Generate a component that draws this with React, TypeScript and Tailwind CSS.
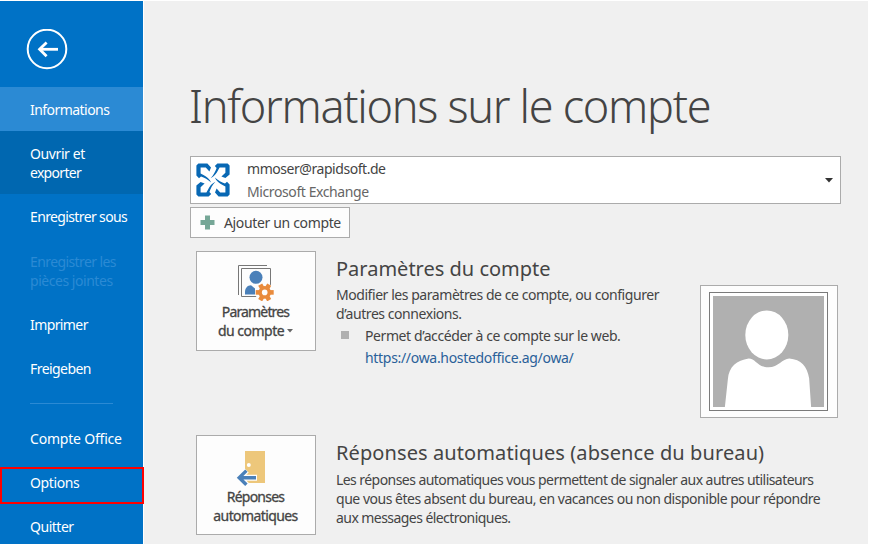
import { clsx } from "clsx";
import type { ReactNode } from "react";

type MenuItem = {
  label: ReactNode;
  className: string;
};

const topItems: MenuItem[] = [
  { label: "Informations", className: "h-[44px] bg-[#2b8ad4] tracking-[-0.55px]" },
  {
    label: (
      <>
        <span className="tracking-[-0.4px]">Ouvrir et</span>
        <br />
        exporter
      </>
    ),
    className: "h-[63px] bg-[#0067b0] pt-px tracking-[-0.7px]",
  },
  { label: "Enregistrer sous", className: "h-[46px] pb-px tracking-[-0.63px]" },
  {
    label: (
      <>
        <span className="tracking-[-0.6px]">Enregistrer les</span>
        <br />
        pièces jointes
      </>
    ),
    className: "h-[62px] pb-px text-[#2b8ad4] tracking-[-0.46px]",
  },
  { label: "Imprimer", className: "h-[45px] pb-px tracking-[-0.6px]" },
  { label: "Freigeben", className: "h-[44px] pb-[2px] tracking-[-0.56px]" },
];

function MenuButton({ label, className }: MenuItem) {
  return (
    <button className={clsx("flex w-full shrink-0 items-center pl-[30px] text-left leading-[19px]", className)}>
      <span>{label}</span>
    </button>
  );
}

function Sidebar() {
  return (
    <nav className="relative z-10 flex w-[143px] shrink-0 flex-col bg-[#0072c6] text-white">
      <button className="mt-[28px] ml-[26px] h-[42px] w-[42px] shrink-0" aria-label="Retour">
        <svg viewBox="0 0 42 42" className="h-full w-full" fill="none" stroke="white">
          <circle cx="21" cy="20" r="19.3" strokeWidth="2" />
          <path d="M32 20.3H14" strokeWidth="2.8" />
          <path d="M20.6 13.4l-7 6.9 7 6.9" strokeWidth="2.8" />
        </svg>
      </button>
      <div className="mt-4 flex flex-col">
        {topItems.map((item, i) => (
          <MenuButton key={i} {...item} />
        ))}
      </div>
      <div className="mt-3 ml-[30px] h-px w-[83px] shrink-0 bg-[#2b8ad4]" />
      <MenuButton label="Compte Office" className="mt-[13px] h-[44px] pb-[2px] tracking-[-0.2px]" />
      <button className="mt-[6px] flex h-[37px] w-[144px] shrink-0 items-center border-2 border-[#f00] pb-[6px] pl-[28px] text-left tracking-[-0.38px]">
        Options
      </button>
      <MenuButton label="Quitter" className="mt-px h-[44px] pb-px tracking-[-0.48px]" />
    </nav>
  );
}

function ExchangeLogo() {
  return (
    <svg viewBox="0 0 34 34" className="h-[34px] w-[34px]" fill="#0868b4">
      {[0, 90, 180, 270].map((angle) => (
        <path
          key={angle}
          transform={`rotate(${angle} 17 17)`}
          d="M.4 2.4L2.4 .4H11.4L15 4.6 13.4 8.6 9.8 4.6H4.6V10.4L7 11.8C10.6 13.4 13.6 16 15.2 19.4 11.8 16.2 8.4 14.6 5 13.4L3 15.2.4 12.6Z"
        />
      ))}
    </svg>
  );
}

function AccountSettingsIcon() {
  return (
    <svg viewBox="0 0 38 36" className="h-[36px] w-[38px] shrink-0">
      <path d="M1.5 30V.5H30" fill="none" stroke="#777" />
      <path d="M4.5 3.5H33.5V31.5H4.5Z" fill="#fdfdfd" stroke="#777" />
      <circle cx="19" cy="12.3" r="6.5" fill="#4a80b9" />
      <path d="M8 29.5V27C8 23 10.5 20.2 14 20.2L18 23.5V29.5Z" fill="#4a80b9" />
      <g transform="translate(27.7 27.4)">
        <circle r="9.6" fill="#fdfdfd" />
        {[30, 90, 150].map((angle) => (
          <rect key={angle} x="-2.3" y="-9" width="4.6" height="18" fill="#e98b3c" transform={`rotate(${angle})`} />
        ))}
        <circle r="6.3" fill="#e98b3c" />
        <circle r="2.8" fill="#fdfdfd" />
      </g>
    </svg>
  );
}

function AutoReplyIcon() {
  return (
    <svg viewBox="0 0 40 37" className="h-[37px] w-[40px] shrink-0">
      <path d="M9 2H29V34H9Z" fill="#edc77b" />
      <circle cx="12.8" cy="16" r="2" fill="white" />
      <path d="M21 28.7H6M10.6 21.4L3 28.7l7.6 7.3" fill="none" stroke="#fdfdfd" strokeWidth="6" />
      <path d="M20 28.7H4M10.4 21.6L3.2 28.7l7.2 7.1" fill="none" stroke="#4a80b9" strokeWidth="3.4" />
    </svg>
  );
}

function Avatar() {
  return (
    <div className="mt-[34px] ml-auto h-[133px] w-[138px] shrink-0 border border-[#ababab] bg-[#fdfdfd] pt-[6px] pl-[8px]">
      <div className="h-[119px] w-[119px] border border-[#7a7a7a] bg-white p-[3px]">
        <svg viewBox="0 0 112 112" className="h-full w-full">
          <path d="M0 0H112V112H0Z" fill="#b0b0b0" />
          <ellipse cx="54.3" cy="39.3" rx="21.7" ry="24.7" fill="white" />
          <path
            d="M12 112L15 84C16 71 24 65 36 63C43 63 45 72 56 72C66 72 70 63 77 63C89 64 95 71 97 83L99 112Z"
            fill="white"
          />
        </svg>
      </div>
    </div>
  );
}

type TileProps = {
  icon: ReactNode;
  children: ReactNode;
};

function Tile({ icon, children }: TileProps) {
  return (
    <button className="flex h-[100px] w-[120px] shrink-0 flex-col items-center border border-[#ababab] bg-[#fdfdfd] pt-[13px] text-center leading-[19px] [-webkit-text-stroke:0.3px]">
      {icon}
      <span className="mt-px pr-px">{children}</span>
    </button>
  );
}

export default function App() {
  return (
    <div className="flex h-[544px] w-[869px] overflow-hidden border-t border-r border-white bg-[#f0f0f0] font-['Noto_Sans','Open_Sans',sans-serif] text-[14px] text-[#444]">
      <Sidebar />
      <main className="flex flex-1 flex-col border-l border-white pl-[46px]">
        <h1 className="mt-[74px] -ml-px h-[64px] text-[45px] leading-[62px] font-light tracking-[-1.3px] whitespace-nowrap">
          Informations sur le compte
        </h1>

        <div className="mt-[17px] flex h-[48px] w-[651px] shrink-0 items-center border border-[#ababab] bg-white pr-[7px] pl-[5px]">
          <ExchangeLogo />
          <div className="ml-[17px] flex-1 leading-[23px]">
            <div className="tracking-[-0.45px]">mmoser@rapidsoft.de</div>
            <div className="tracking-[-0.4px] text-[#666]">Microsoft Exchange</div>
          </div>
          <svg viewBox="0 0 8 5" className="h-[5px] w-[8px]" fill="#333">
            <path d="M0 0H8L4 4.5Z" />
          </svg>
        </div>

        <button className="mt-[3px] flex h-[31px] w-[160px] shrink-0 items-center border border-[#ababab] bg-[#fdfdfd] pl-[9px]">
          <svg viewBox="0 0 15 15" className="h-[15px] w-[15px]" fill="#76a797">
            <path d="M5 0.5H10V5H14.5V10H10V14.5H5V10H0.5V5H5Z" />
          </svg>
          <span className="ml-[9px] tracking-[-0.35px]">Ajouter un compte</span>
        </button>

        <section className="mt-[13px] flex h-[184px] w-[648px] shrink-0 pl-[6px]">
          <Tile icon={<AccountSettingsIcon />}>
            <span className="tracking-[-0.85px]">Paramètres</span>
            <br />
            <span className="tracking-[-0.5px]">du compte</span>
            <svg viewBox="0 0 6 4" className="ml-[3px] inline h-[4px] w-[6px] align-[3px]" fill="#666">
              <path d="M0 0H6L3 3.5Z" />
            </svg>
          </Tile>
          <div className="ml-[20px] whitespace-nowrap">
            <h2 className="mt-[4px] text-[20px] leading-[28px]">Paramètres du compte</h2>
            <p className="mt-[2px] leading-[19px] tracking-[-0.445px]">
              Modifier les paramètres de ce compte, ou configurer
              <br />
              d’autres connexions.
            </p>
            <div className="mt-[2px] flex leading-[22px]">
              <span className="mt-[6px] ml-[5px] h-[8px] w-[8px] bg-[#b0b0b0]" />
              <div className="ml-[16px]">
                <div className="tracking-[-0.41px]">Permet d’accéder à ce compte sur le web.</div>
                <a className="tracking-[-0.31px] text-[#2a6099]">https://owa.hostedoffice.ag/owa/</a>
              </div>
            </div>
          </div>
          <Avatar />
        </section>

        <section className="flex shrink-0 pl-[6px]">
          <Tile icon={<AutoReplyIcon />}>
            <span className="tracking-[-0.75px]">Réponses</span>
            <br />
            <span className="tracking-[-0.6px]">automatiques</span>
          </Tile>
          <div className="ml-[20px] whitespace-nowrap">
            <h2 className="mt-[4px] text-[20px] leading-[28px] tracking-[0.1px]">
              Réponses automatiques (absence du bureau)
            </h2>
            <p className="mt-[3px] leading-[19px] tracking-[-0.56px]">
              Les réponses automatiques vous permettent de signaler aux autres utilisateurs
              <br />
              <span className="tracking-[-0.48px]">
                que vous êtes absent du bureau, en vacances ou non disponible pour répondre
              </span>
              <br />
              aux messages électroniques.
            </p>
          </div>
        </section>
      </main>
    </div>
  );
}
